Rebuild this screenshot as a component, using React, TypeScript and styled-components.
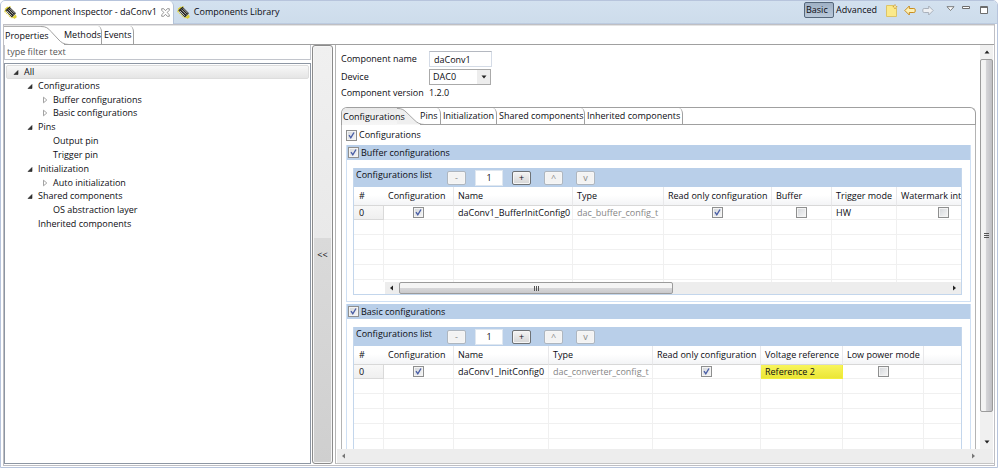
import React, { useState } from "react";
import styled, { createGlobalStyle, css } from "styled-components";

const GlobalStyle = createGlobalStyle`
  * { box-sizing: border-box; }
  body {
    margin: 0;
    background: #ffffff;
    color: #0c0c12;
    font: 9px/14px "Open Sans", "Noto Sans", sans-serif;
  }
  button, input, select {
    margin: 0;
    padding: 0;
    border: 0;
    background: none;
    color: inherit;
    font: inherit;
  }
`;

/* ---------- window frame ---------- */

const Window = styled.div`
  display: flex;
  flex-direction: column;
  height: 100vh;
  overflow: hidden;
  border: 1px solid #b7c4dc;
  border-radius: 5px 5px 0 0;
  white-space: nowrap;
`;

const TitleBar = styled.header`
  display: flex;
  flex: none;
  height: 23px;
  border-bottom: 1px solid #bccbe0;
  background: linear-gradient(#d3e1ef, #cddceb);
`;

const ViewTab = styled.button<{ $active?: boolean }>`
  display: flex;
  align-items: center;
  gap: 4px;
  height: 23px;
  padding: 0 3px 1px 3px;
  ${(p) =>
    p.$active &&
    css`
      border-right: 1px solid #b3c2d8;
      border-radius: 4px 5px 0 0;
      background: #ffffff;
    `}
`;

const ViewTitle = styled.span`
  text-align: left;
`;

const ViewTools = styled.div`
  display: flex;
  align-items: flex-start;
  margin-left: auto;
  padding: 1px 9px 0 0;
`;

const ModeButton = styled.button<{ $pressed?: boolean }>`
  height: 16px;
  padding: 0 1px;
  border: 1px solid ${(p) => (p.$pressed ? "#56677b" : "transparent")};
  border-radius: 2px;
  background: ${(p) => (p.$pressed ? "linear-gradient(#9fb0c4, #b9c8d9)" : "none")};
  width: ${(p) => (p.$pressed ? 30 : 45)}px;
  text-align: left;
`;

const IconButton = styled.button<{ $gap: number }>`
  display: flex;
  align-items: center;
  height: 16px;
  margin-left: ${(p) => p.$gap}px;
`;

const Body = styled.div`
  display: flex;
  flex: 1;
  flex-direction: column;
  min-height: 0;
  margin: 0 2px 1px;
  padding-bottom: 1px;
  border: 1px solid #bfbfc4;
`;

const Columns = styled.div`
  display: grid;
  flex: 1;
  grid-template-columns: minmax(0, 307fr) 24px minmax(0, 659fr);
  grid-template-rows: minmax(0, 1fr);
  min-height: 0;
`;

/* ---------- curved tabs ---------- */

const Strip = styled.div<{ $folder?: boolean }>`
  display: flex;
  flex: none;
  height: ${(p) => (p.$folder ? 18 : 20)}px;
  border-top: 1px solid ${(p) => (p.$folder ? "#a0a0a0" : "#e4e4e4")};
  ${(p) =>
    p.$folder &&
    css`
      border-left: 1px solid #a0a0a0;
      border-right: 1px solid #a0a0a0;
      border-radius: 6px 6px 0 0;
      overflow: hidden;
    `}
`;

const ActiveTab = styled.button<{ $shaded?: boolean; $width: number }>`
  width: ${(p) => p.$width}px;
  padding: 0 0 0 1px;
  border-top: ${(p) => (p.$shaded ? 0 : "1px solid #b0b0b0")};
  background: ${(p) => (p.$shaded ? "linear-gradient(#e9e9e9, #f6f6f6)" : "#ffffff")};
  text-align: left;
  overflow: visible;
  white-space: nowrap;
  z-index: 1;
`;

const CurveSvg = styled.svg`
  flex: none;
  height: 100%;
`;

const Tab = styled.button<{ $width: number; $first?: boolean }>`
  width: ${(p) => p.$width}px;
  padding: 0 0 0 ${(p) => (p.$first ? 0 : 2)}px;
  border-right: 1px solid #a0a0a0;
  border-bottom: 1px solid #a0a0a0;
  border-top-right-radius: 4px 6px;
  text-align: left;
  ${(p) => p.$first && css`margin-left: -5px;`}
`;

const StripRest = styled.div`
  flex: 1;
  border-bottom: 1px solid #a0a0a0;
`;

function Curve({ shaded }: { shaded?: boolean }) {
  return (
    <CurveSvg width="28" viewBox="0 0 28 19" preserveAspectRatio="none" aria-hidden="true">
      <path
        d="M0 0 C5 .5 7 2 10 5.500 L17 13 C20 16.500 23 18.500 28 18.500 H0Z"
        fill={shaded ? "#efefef" : "#ffffff"}
      />
      <path
        d="M0 .5 C5 .5 7 2 10 5.500 L17 13 C20 16.500 23 18.500 28 18.500"
        fill="none"
        stroke="#a0a0a0"
      />
    </CurveSvg>
  );
}

/* ---------- property tree ---------- */

const TreeSide = styled.aside`
  display: flex;
  flex-direction: column;
  gap: 3px;
  min-height: 0;
`;

const FilterInput = styled.input`
  width: 100%;
  height: 15px;
  padding: 0 2px 1px;
  border: 1px solid #c2c5cc;
  border-top: 0;
  outline: none;
  &::placeholder { color: #555555; opacity: 1; }
`;

const TreeBox = styled.div`
  flex: 1;
  min-height: 0;
  padding: 1px;
  border: 1px solid #8d96a3;
  overflow: hidden;
`;

const TreeList = styled.ul`
  display: grid;
  grid-template-rows: repeat(12, minmax(0, 1fr));
  height: 166px;
  margin: 0;
  padding: 0;
  list-style: none;
  line-height: 12px;
`;

const TreeRow = styled.li<{ $level: number; $selected?: boolean }>`
  display: flex;
  align-items: center;
  gap: 5px;
  padding-left: ${(p) => 6 + p.$level * 15 - (p.$level ? 1 : 0)}px;
  border: 1px solid ${(p) => (p.$selected ? "#dddddd" : "transparent")};
  border-radius: 2px;
  background: ${(p) => (p.$selected ? "linear-gradient(#f8f8f8, #e5e5e5)" : "none")};
`;

type Node = { label: string; level: number; state?: "open" | "closed" };

const nodes: Node[] = [
  { label: "All", level: 0, state: "open" },
  { label: "Configurations", level: 1, state: "open" },
  { label: "Buffer configurations", level: 2, state: "closed" },
  { label: "Basic configurations", level: 2, state: "closed" },
  { label: "Pins", level: 1, state: "open" },
  { label: "Output pin", level: 2 },
  { label: "Trigger pin", level: 2 },
  { label: "Initialization", level: 1, state: "open" },
  { label: "Auto initialization", level: 2, state: "closed" },
  { label: "Shared components", level: 1, state: "open" },
  { label: "OS abstraction layer", level: 2 },
  { label: "Inherited components", level: 1 },
];

function Twisty({ state }: { state?: "open" | "closed" }) {
  return (
    <svg width="6" height="8" viewBox="0 0 6 8" aria-hidden="true">
      {state === "open" && <path d="M5 2.500v4H1z" fill="#333" stroke="#222" strokeWidth=".6" />}
      {state === "closed" && <path d="M1.500 1.200v5.600L4.800 4z" fill="#fff" stroke="#999" strokeWidth=".9" />}
    </svg>
  );
}

/* ---------- collapse bar ---------- */

const CollapseBar = styled.button`
  margin: 0 2px 0 1px;
  border: 1px solid #8b8b8b;
  border-radius: 3px;
  background: linear-gradient(#f0f0f0, #e9e9e9 46%, #dadada 46%, #cfcfcf);
  box-shadow: inset 0 0 0 1px #f6f6f6;
`;

/* ---------- editor pane ---------- */

const Editor = styled.main`
  display: grid;
  grid-template-columns: minmax(0, 1fr) 13px;
  grid-template-rows: minmax(0, 1fr) 14px;
  min-height: 0;
  padding: 0 1px 0 1px;
  border-left: 1px solid #b5b5b5;
  border-bottom: 1px solid #c4c4c4;
`;

const Viewport = styled.div`
  padding: 5px 4px 0;
  overflow: hidden;
`;

const Form = styled.div`
  display: grid;
  grid-template-columns: 88px 1fr;
  grid-template-rows: 18px 18px 14px;
  align-items: center;
  margin-bottom: 7px;
`;

const NameInput = styled.input`
  width: 63px;
  height: 16px;
  padding: 0 4px;
  border: 1px solid #d4dbe6;
  border-top-color: #b4b8c0;
`;

const SelectBox = styled.div`
  position: relative;
  width: 62px;
  height: 16px;
  border: 1px solid #aaaaaa;
`;

const DeviceSelect = styled.select`
  display: block;
  width: 100%;
  height: 14px;
  padding: 0 3px;
  appearance: none;
`;

const SelectArrow = styled.span`
  position: absolute;
  top: 0;
  right: 0;
  display: flex;
  align-items: center;
  justify-content: center;
  width: 13px;
  height: 14px;
  background: #ededed;
  pointer-events: none;
`;

const Page = styled.div`
  padding: 0 4px 20px;
  border: 1px solid #b4b4b4;
  border-top: 0;
`;

const CheckLabel = styled.label<{ $bar?: boolean }>`
  display: flex;
  align-items: center;
  gap: 2px;
  height: ${(p) => (p.$bar ? 15 : 20)}px;
  padding-left: ${(p) => (p.$bar ? 1 : 0)}px;
  background: ${(p) => (p.$bar ? "#b9cfe9" : "none")};
`;

const Check = styled.input.attrs({ type: "checkbox" })`
  flex: none;
  width: 11px;
  height: 11px;
  appearance: none;
  border: 1px solid #8e8f8f;
  background: linear-gradient(135deg, #d3d6da, #f7f7f7);
  box-shadow: inset 0 0 0 1px #f4f4f4;
  &:checked {
    background: url("data:image/svg+xml,%3Csvg xmlns='http://www.w3.org/2000/svg' viewBox='0 0 9 9'%3E%3Cpath d='M2 4.200 3.800 6.800 7 1.500' fill='none' stroke='%234a5ea6' stroke-width='1.400'/%3E%3C/svg%3E")
        center / 9px 9px no-repeat,
      linear-gradient(135deg, #d3d6da, #f7f7f7);
  }
`;

const Group = styled.section`
  margin-bottom: 2px;
  border: solid #cfe0f4;
  border-width: 0 1px 1px;
`;

const GroupBody = styled.div`
  padding: 8px 8px 6px 6px;
`;

const List = styled.div`
  border: 1px solid #c3d6ec;
  border-top: 0;
`;

const ListBar = styled.div`
  display: grid;
  grid-template-columns: 82px 19px 28px 19px 23px 23px;
  column-gap: 9px;
  align-items: center;
  height: 19px;
  padding-left: 2px;
  background: #b9cfe9;
`;

const ListTitle = styled.span`
  align-self: start;
`;

const ListButton = styled.button<{ $far?: boolean }>`
  width: 19px;
  height: 14px;
  border: 1px solid #6e7276;
  border-radius: 2px;
  background: linear-gradient(#f4f4f4, #d6d6d6);
  box-shadow: inset 0 0 0 1px #f6f6f6;
  line-height: 11px;
  ${(p) => p.$far && css`margin-left: 4px;`}
  &:disabled {
    border-color: #aeb6bf;
    background: #f3f3f3;
    color: #8a8a8a;
  }
`;

const CountInput = styled.input`
  width: 28px;
  height: 16px;
  border: 1px solid #dfe7f0;
  background: #ffffff;
  text-align: center;
`;

const TableClip = styled.div<{ $tall?: boolean }>`
  height: ${(p) => (p.$tall ? 110 : 95)}px;
  overflow: hidden;
`;

const Table = styled.table`
  width: 100%;
  border-collapse: separate;
  border-spacing: 0;
  table-layout: fixed;
`;

const Col = styled.col<{ $width?: number }>`
  width: ${(p) => (p.$width ? `${p.$width}px` : "auto")};
`;

const Th = styled.th`
  height: 19px;
  padding: 0 0 0 4px;
  border-right: 1px solid #e8e8ea;
  border-bottom: 1px solid #d8d8d8;
  background: linear-gradient(#ffffff 45%, #f3f4f6);
  font-weight: 400;
  text-align: left;
  &:first-child {
    padding-left: 5px;
    border-right: 0;
  }
  &:last-child { border-right: 0; }
`;

const Td = styled.td<{ $kind?: "muted" | "warn" | "index"; $center?: boolean; $first?: boolean }>`
  height: ${(p) => (p.$first ? 14 : 15)}px;
  padding: 0 0 0 ${(p) => (p.$center ? 0 : p.$kind === "index" ? 5 : 4)}px;
  border-right: 1px solid #f0f0f0;
  border-bottom: 1px solid #f0f0f0;
  line-height: 12px;
  text-align: ${(p) => (p.$center ? "center" : "left")};
  &:last-child { border-right: 0; }
  ${(p) => p.$kind === "muted" && css`color: #868686;`}
  ${(p) =>
    p.$kind === "warn" &&
    css`
      border-color: #f2ee3c;
      background: linear-gradient(#f8f55c, #ebe636);
    `}
  ${(p) =>
    p.$kind === "index" &&
    css`
      border-color: #d9d9d9;
      background: linear-gradient(#f8f8f8, #efefef);
    `}
  ${Check} { display: block; margin: 0 auto; }
`;

/* ---------- scroll bars ---------- */

const HBar = styled.div<{ $inner?: boolean }>`
  display: flex;
  height: ${(p) => (p.$inner ? 12 : 14)}px;
  margin-left: ${(p) => (p.$inner ? 31 : 0)}px;
  background: #ededed;
`;

const HTrack = styled.div`
  display: flex;
  flex: 1;
`;

const HThumb = styled.div`
  display: flex;
  flex: 0 0 50%;
  align-items: center;
  justify-content: center;
  border: 1px solid #9b9b9b;
  border-radius: 2px;
  background: linear-gradient(#f5f5f5 45%, #d8d8da 50%, #c9c9cc);
`;

const VBar = styled.div`
  display: flex;
  flex-direction: column;
  background: #f0f0f0;
`;

const VTrack = styled.div`
  flex: 1;
`;

const VThumb = styled.div`
  display: flex;
  align-items: center;
  justify-content: center;
  height: 94%;
  border: 1px solid #9b9b9b;
  border-radius: 2px;
  background: linear-gradient(90deg, #f3f3f3 40%, #d4d4d7 50%, #bfbfc4);
`;

const Arrow = styled.button`
  display: flex;
  flex: 0 0 14px;
  align-items: center;
  justify-content: center;
`;

const Corner = styled.div`
  background: #ededed;
`;

const arrowPaths = {
  left: "M4 .5v5L1 3z",
  right: "M2 .5v5l3-2.500z",
  up: "M.5 4.500h5L3 1.500z",
  down: "M.5 1.500h5L3 4.500z",
};

function Glyph({ dir, faded }: { dir: keyof typeof arrowPaths; faded?: boolean }) {
  return (
    <svg width="6" height="6" viewBox="0 0 6 6" aria-hidden="true">
      <path d={arrowPaths[dir]} fill={faded ? "#777777" : "#222222"} />
    </svg>
  );
}

/* ---------- icons ---------- */

function ChipIcon() {
  return (
    <svg width="13" height="13" viewBox="0 0 13 13" aria-hidden="true">
      <path d="M1 3.500 4 1M3 3l3.500-2.500M.5 5.500 2.500 4M8.500 12l3.500-3M10 12.300l2.500-2" stroke="#ddd03a" strokeWidth="1.500" />
      <path d="M1.300 4.300 5.500.8 12 7.300 7.800 11.500z" fill="#23231f" />
      <path d="M.8 5.500 7.500 12" stroke="#e6d94a" strokeWidth="1.200" strokeDasharray="1.200 .9" />
      <path d="M2.800 4.800l5 5M4.300 3.500l5 5M5.800 2.400l5 5" stroke="#e3e3e3" strokeWidth=".8" />
    </svg>
  );
}

function CloseIcon() {
  return (
    <svg width="9" height="9" viewBox="0 0 9 9" aria-hidden="true">
      <path
        d="M.7.7h2L4.500 2.700 6.300.7h2v1.600L6.100 4.500l2.200 2.200v1.600h-2L4.500 6.300 2.700 8.300h-2V6.700l2.200-2.200L.7 2.300z"
        fill="#fff"
        stroke="#7d7d7d"
        strokeWidth=".8"
      />
    </svg>
  );
}

function NoteIcon() {
  return (
    <svg width="12" height="13" viewBox="0 0 12 13" aria-hidden="true">
      <path d="M.5 1.500h7.500l2.500 2.500v8.500H.5z" fill="#fbe98a" stroke="#dcc468" />
      <path d="M9 .5v4.500M6.800 2.700h4.400" stroke="#c9962e" strokeWidth="1.200" />
      <path d="M9 1.500v2.500M7.800 2.700h2.500" stroke="#fff3b0" strokeWidth=".9" />
    </svg>
  );
}

function NavArrow({ back }: { back?: boolean }) {
  return (
    <svg width="12" height="11" viewBox="0 0 12 11" aria-hidden="true">
      <path
        d={
          back
            ? "M.8 5.500 5.300 1v2.500h4.500q1.400 0 1.400 1.200v1.600q0 1.200-1.400 1.200H5.300V10z"
            : "M11.200 5.500 6.700 1v2.500H2.200Q.8 3.500.8 4.700v1.600q0 1.200 1.400 1.200h4.500V10z"
        }
        fill={back ? "#fdf0b4" : "#eef0f3"}
        stroke={back ? "#c98d1f" : "#a9b0ba"}
      />
    </svg>
  );
}

function MenuIcon() {
  return (
    <svg width="9" height="9" viewBox="0 0 9 9" aria-hidden="true">
      <path d="M1 .7h7L4.500 4.500z" fill="#fff" stroke="#6d6d6d" strokeWidth=".9" />
    </svg>
  );
}

function MinimizeIcon() {
  return (
    <svg width="8" height="8" viewBox="0 0 8 8" aria-hidden="true">
      <path d="M.5 .5h7v2h-7z" fill="#fff" stroke="#6d6d6d" />
    </svg>
  );
}

function MaximizeIcon() {
  return (
    <svg width="8" height="8" viewBox="0 0 8 8" aria-hidden="true">
      <path d="M.5.5h7v7h-7z" fill="#fff" stroke="#6d6d6d" />
      <path d="M.5 1.500h7" stroke="#6d6d6d" />
    </svg>
  );
}

function Grip({ vertical }: { vertical?: boolean }) {
  return (
    <svg width="7" height="7" viewBox="0 0 7 7" aria-hidden="true">
      <path d={vertical ? "M1 1.500h5M1 3.500h5M1 5.500h5" : "M1.500 1v5M3.500 1v5M5.500 1v5"} stroke="#555" />
    </svg>
  );
}

/* ---------- configuration group ---------- */

type Column = { title: string; width: number; value: string | boolean; kind?: "muted" | "warn" | "index" };

function Toggle({ initial, label }: { initial: boolean; label: string }) {
  const [on, setOn] = useState(initial);
  return <Check checked={on} onChange={() => setOn(!on)} aria-label={label} />;
}

function ConfigGroup({ title, columns, tall }: { title: string; columns: Column[]; tall?: boolean }) {
  const blanks = Array.from({ length: tall ? 6 : 5 });
  return (
    <Group>
      <CheckLabel $bar>
        <Check defaultChecked />
        {title}
      </CheckLabel>
      <GroupBody>
        <List>
          <ListBar>
            <ListTitle>Configurations list</ListTitle>
            <ListButton disabled aria-label="Remove">-</ListButton>
            <CountInput defaultValue="1" aria-label={`${title} count`} />
            <ListButton aria-label="Add">+</ListButton>
            <ListButton $far disabled aria-label="Move up">^</ListButton>
            <ListButton $far disabled aria-label="Move down">v</ListButton>
          </ListBar>
          <TableClip $tall={tall}>
            <Table>
              <colgroup>
                {columns.map((c) => (
                  <Col key={c.title} $width={c.width} />
                ))}
                <Col />
              </colgroup>
              <thead>
                <tr>
                  {columns.map((c) => (
                    <Th key={c.title} scope="col">{c.title}</Th>
                  ))}
                  <Th as="td" />
                </tr>
              </thead>
              <tbody>
                <tr>
                  {columns.map((c) => (
                    <Td key={c.title} $first $kind={c.kind} $center={typeof c.value === "boolean"}>
                      {typeof c.value === "boolean" ? <Toggle initial={c.value} label={c.title} /> : c.value}
                    </Td>
                  ))}
                  <Td $first />
                </tr>
                {blanks.map((_, i) => (
                  <tr key={i}>
                    {columns.map((c) => (
                      <Td key={c.title} />
                    ))}
                    <Td />
                  </tr>
                ))}
              </tbody>
            </Table>
          </TableClip>
          {!tall && (
            <HBar $inner>
              <Arrow aria-label="Scroll left"><Glyph dir="left" /></Arrow>
              <HTrack><HThumb><Grip /></HThumb></HTrack>
              <Arrow aria-label="Scroll right"><Glyph dir="right" /></Arrow>
            </HBar>
          )}
        </List>
      </GroupBody>
    </Group>
  );
}

const bufferColumns: Column[] = [
  { title: "#", width: 30, value: "0", kind: "index" },
  { title: "Configuration", width: 70, value: true },
  { title: "Name", width: 119, value: "daConv1_BufferInitConfig0" },
  { title: "Type", width: 91, value: "dac_buffer_config_t", kind: "muted" },
  { title: "Read only configuration", width: 108, value: true },
  { title: "Buffer", width: 60, value: false },
  { title: "Trigger mode", width: 65, value: "HW" },
  { title: "Watermark int", width: 94, value: false },
];

const basicColumns: Column[] = [
  { title: "#", width: 30, value: "0", kind: "index" },
  { title: "Configuration", width: 70, value: true },
  { title: "Name", width: 95, value: "daConv1_InitConfig0" },
  { title: "Type", width: 104, value: "dac_converter_config_t", kind: "muted" },
  { title: "Read only configuration", width: 108, value: true },
  { title: "Voltage reference", width: 82, value: "Reference 2", kind: "warn" },
  { title: "Low power mode", width: 81, value: false },
];

export default function App() {
  return (
    <>
      <GlobalStyle />
      <Window>
        <TitleBar>
          <ViewTab $active>
            <ChipIcon />
            <ViewTitle>Component Inspector - daConv1</ViewTitle>
            <CloseIcon />
          </ViewTab>
          <ViewTab>
            <ChipIcon />
            <ViewTitle>Components Library</ViewTitle>
          </ViewTab>
          <ViewTools>
            <ModeButton $pressed aria-pressed="true">Basic</ModeButton>
            <ModeButton aria-pressed="false">Advanced</ModeButton>
            <IconButton $gap={7} aria-label="New"><NoteIcon /></IconButton>
            <IconButton $gap={6} aria-label="Back"><NavArrow back /></IconButton>
            <IconButton $gap={6} aria-label="Forward"><NavArrow /></IconButton>
            <IconButton $gap={12} aria-label="View menu"><MenuIcon /></IconButton>
            <IconButton $gap={7} aria-label="Minimize"><MinimizeIcon /></IconButton>
            <IconButton $gap={10} aria-label="Maximize"><MaximizeIcon /></IconButton>
          </ViewTools>
        </TitleBar>

        <Body>
          <Strip>
            <ActiveTab $width={37}>Properties</ActiveTab>
            <Curve />
            <Tab $first $width={38}>Methods</Tab>
            <Tab $width={32}>Events</Tab>
            <StripRest />
          </Strip>

          <Columns>
            <TreeSide>
              <FilterInput placeholder="type filter text" aria-label="Filter" />
              <TreeBox>
                <TreeList>
                  {nodes.map((n) => (
                    <TreeRow key={n.label} $level={n.level} $selected={n.level === 0}>
                      <Twisty state={n.state} />
                      {n.label}
                    </TreeRow>
                  ))}
                </TreeList>
              </TreeBox>
            </TreeSide>

            <CollapseBar>&lt;&lt;</CollapseBar>

            <Editor>
              <Viewport>
                <Form>
                  <label htmlFor="component-name">Component name</label>
                  <NameInput id="component-name" defaultValue="daConv1" />
                  <label htmlFor="device">Device</label>
                  <SelectBox>
                    <DeviceSelect id="device" defaultValue="DAC0">
                      <option>DAC0</option>
                    </DeviceSelect>
                    <SelectArrow><Glyph dir="down" /></SelectArrow>
                  </SelectBox>
                  <span>Component version</span>
                  <span>1.2.0</span>
                </Form>

                <Strip $folder>
                  <ActiveTab $shaded $width={55}>Configurations</ActiveTab>
                  <Curve shaded />
                  <Tab $first $width={21}>Pins</Tab>
                  <Tab $width={56}>Initialization</Tab>
                  <Tab $width={88}>Shared components</Tab>
                  <Tab $width={98}>Inherited components</Tab>
                  <StripRest />
                </Strip>
                <Page>
                  <CheckLabel>
                    <Check defaultChecked />
                    Configurations
                  </CheckLabel>
                  <ConfigGroup title="Buffer configurations" columns={bufferColumns} />
                  <ConfigGroup title="Basic configurations" columns={basicColumns} tall />
                </Page>
              </Viewport>
              <VBar>
                <Arrow aria-label="Scroll up"><Glyph dir="up" /></Arrow>
                <VTrack><VThumb><Grip vertical /></VThumb></VTrack>
                <Arrow aria-label="Scroll down"><Glyph dir="down" /></Arrow>
              </VBar>
              <HBar>
                <Arrow aria-label="Scroll left"><Glyph dir="left" faded /></Arrow>
                <HTrack />
                <Arrow aria-label="Scroll right"><Glyph dir="right" faded /></Arrow>
              </HBar>
              <Corner />
            </Editor>
          </Columns>
        </Body>
      </Window>
    </>
  );
}
